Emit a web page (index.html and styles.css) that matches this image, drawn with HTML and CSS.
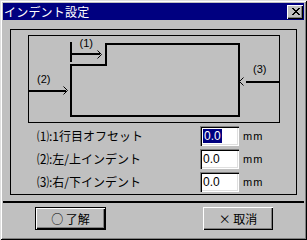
FILE: index.html
```html
<!DOCTYPE html>
<html lang="ja">
<head>
<meta charset="utf-8">
<link rel="stylesheet" href="styles.css">
</head>
<body>
<div class="window">
  <div class="titlebar">
    <span class="title">インデント設定</span>
    <span class="close"><svg width="8" height="7" viewBox="0 0 8 7"><path d="M0 0h2v1h-2zM6 0h2v1h-2zM1 1h2v1h-2zM5 1h2v1h-2zM2 2h4v1h-4zM3 3h2v1h-2zM2 4h4v1h-4zM1 5h2v1h-2zM5 5h2v1h-2zM0 6h2v1h-2zM6 6h2v1h-2z" fill="#000"/></svg></span>
  </div>
  <div class="body">
    <div class="frame">
      <svg class="diagram" width="252" height="88" viewBox="0 0 252 88">
        <rect x="0.5" y="0.5" width="251" height="87" fill="none" stroke="#000" stroke-width="1"/>
        <polygon points="43,30 78,30 78,9 211,9 211,81 43,81" fill="none" stroke="#000" stroke-width="2"/>
        <line x1="43" y1="7" x2="43" y2="27" stroke="#000" stroke-width="2"/>
        <line x1="43" y1="19" x2="72" y2="19" stroke="#000" stroke-width="2"/>
        <polyline points="69.5,15.5 73.5,19.5 69.5,23.5" fill="none" stroke="#000" stroke-width="1"/>
        <line x1="0" y1="56" x2="38" y2="56" stroke="#000" stroke-width="2"/>
        <polyline points="35.5,51.5 39.5,55.5 35.5,59.5" fill="none" stroke="#000" stroke-width="1"/>
        <line x1="218" y1="47" x2="251" y2="47" stroke="#000" stroke-width="2"/>
        <polyline points="215.5,42.5 211.5,46.5 215.5,50.5" fill="none" stroke="#000" stroke-width="1"/>
        <text x="51.5" y="12" class="dlabel">(1)</text>
        <text x="9" y="48" class="dlabel">(2)</text>
        <text x="225" y="38" class="dlabel">(3)</text>
      </svg>
      <div class="rows">
        <span class="label">⑴:1行目オフセット</span>
        <span class="field"><span class="sel">0.0</span></span>
        <span class="unit">mm</span>
        <span class="label">⑵:左/上インデント</span>
        <span class="field">0.0</span>
        <span class="unit">mm</span>
        <span class="label">⑶:右/下インデント</span>
        <span class="field">0.0</span>
        <span class="unit">mm</span>
      </div>
    </div>
    <div class="separator"></div>
    <div class="buttons">
      <span class="btn default">○ 了解</span>
      <span class="btn">× 取消</span>
    </div>
  </div>
</div>
</body>
</html>
```
FILE: styles.css
```css
* { box-sizing: border-box; }
html, body { margin: 0; padding: 0; background: #c0c0c0; }
body {
  font-family: "Noto Sans CJK JP", "Liberation Sans", sans-serif;
  font-size: 12px;
  color: #000;
}
.window {
  width: 307px;
  height: 240px;
  padding: 3px;
  background: #c0c0c0;
  box-shadow: inset 1px 1px #dfdfdf, inset -1px -1px #000, inset 2px 2px #fff, inset -2px -2px #808080;
  display: flex;
  flex-direction: column;
}
.titlebar {
  height: 17px;
  background: #000080;
  color: #fff;
  display: flex;
  align-items: center;
  justify-content: space-between;
  padding: 0 1px 0 1px;
}
.title {
  font-size: 12px;
  line-height: 17px;
  letter-spacing: 0.2px;
}
.close {
  width: 16px;
  height: 14px;
  background: #c0c0c0;
  box-shadow: inset 1px 1px #fff, inset -1px -1px #000, inset -2px -2px #808080;
  display: flex;
  align-items: center;
  justify-content: center;
  padding-left: 1px;
}
.close svg { display: block; }
.body {
  flex: 1;
  display: flex;
  flex-direction: column;
}
.frame {
  margin: 9px 7px 0 7px;
  height: 166px;
  border: 1px solid #000;
  padding: 5px 16px 0 17px;
}
.diagram { display: block; }
.dlabel {
  font-family: "Liberation Sans", sans-serif;
  font-size: 11px;
  fill: #000;
}
.rows {
  margin-top: 3px;
  display: grid;
  grid-template-columns: 1fr 39px 41px;
  grid-auto-rows: 20px;
  row-gap: 3px;
  align-items: center;
}
.label {
  padding-left: 9px;
  font-size: 12px;
  line-height: 20px;
}
.field {
  height: 20px;
  background: #fff;
  box-shadow: inset 1px 1px #808080, inset 2px 2px #000, inset -1px -1px #fff, inset -2px -2px #dfdfdf;
  font-family: "Liberation Sans", sans-serif;
  font-size: 12px;
  line-height: 20px;
  padding-left: 3px;
}
.sel {
  background: #000080;
  color: #fff;
  display: inline-block;
  line-height: 14px;
  padding: 0 1px;
}
.unit {
  font-family: "Liberation Sans", sans-serif;
  font-size: 11px;
  letter-spacing: 1px;
  padding-left: 4px;
}
.separator {
  margin-top: 6px;
  height: 2px;
  background: #000;
}
.buttons {
  margin-top: 4px;
  display: flex;
  padding-left: 32px;
  gap: 97px;
}
.btn {
  width: 71px;
  height: 23px;
  display: flex;
  align-items: center;
  justify-content: center;
  font-size: 12px;
  white-space: pre;
  background: #c0c0c0;
  box-shadow: inset 1px 1px #fff, inset -1px -1px #000, inset -2px -2px #808080;
}
.btn.default {
  box-shadow: inset 0 0 0 1px #000, inset 2px 2px #fff, inset -2px -2px #000, inset -3px -3px #808080;
}
.btn + .btn { width: 70px; }
```
